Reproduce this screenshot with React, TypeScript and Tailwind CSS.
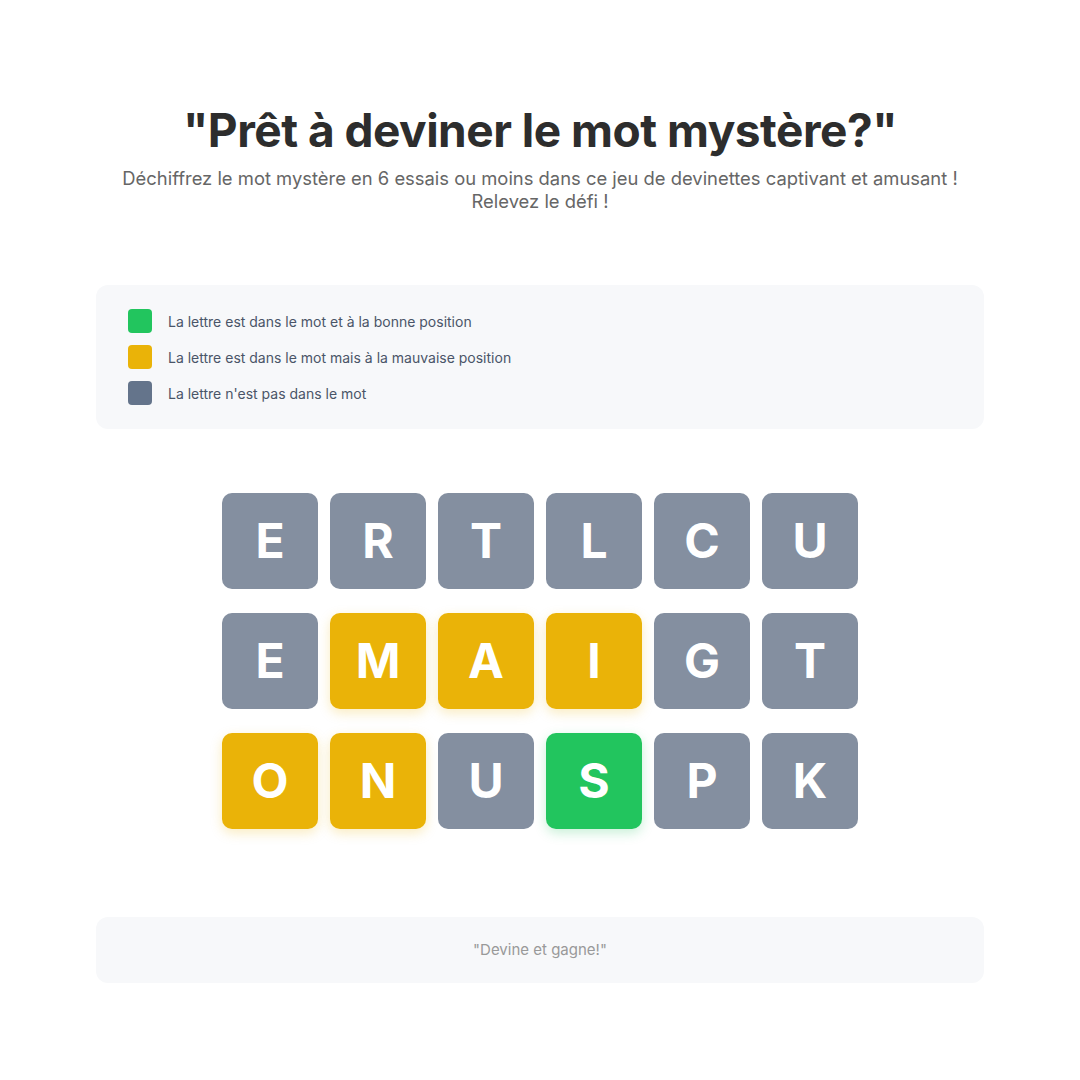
import React from "react";

type Tile = { l: string; s: "g" | "y" | "x" };

const rows: Tile[][] = [
  [
    { l: "E", s: "x" },
    { l: "R", s: "x" },
    { l: "T", s: "x" },
    { l: "L", s: "x" },
    { l: "C", s: "x" },
    { l: "U", s: "x" },
  ],
  [
    { l: "E", s: "x" },
    { l: "M", s: "y" },
    { l: "A", s: "y" },
    { l: "I", s: "y" },
    { l: "G", s: "x" },
    { l: "T", s: "x" },
  ],
  [
    { l: "O", s: "y" },
    { l: "N", s: "y" },
    { l: "U", s: "x" },
    { l: "S", s: "g" },
    { l: "P", s: "x" },
    { l: "K", s: "x" },
  ],
];

function tileClass(s: Tile["s"]) {
  if (s === "g") return "bg-[#22c55e] shadow-[0_4px_12px_rgba(34,197,94,0.25)]";
  if (s === "y") return "bg-[#eab308] shadow-[0_4px_12px_rgba(234,179,8,0.25)]";
  return "bg-[#848fa0]";
}

export default function App() {
  return (
    <div className="min-h-[1080px] w-full bg-white" style={{ fontFamily: "Inter, 'Liberation Sans', sans-serif" }}>
      <div className="mx-auto w-[888px] pt-[100px]">
        <header className="text-center">
          <h1 className="text-[46px] font-bold leading-[60px] tracking-[-0.5px] text-[#2d2d2d]">
            "Prêt à deviner le mot mystère?"
          </h1>
          <p className="mx-auto mt-[7px] text-[18.4px] leading-[23px] text-[#666666]">
            Déchiffrez le mot mystère en 6 essais ou moins dans ce jeu de devinettes captivant et amusant !
            <br />
            Relevez le défi !
          </p>
        </header>

        <section className="mt-[72px] rounded-[12px] bg-[#f7f8fa] px-[32px] py-[24px]">
          <div className="flex flex-col gap-[12px]">
            <div className="flex items-center gap-[16px]">
              <span className="h-[24px] w-[24px] rounded-[4px] bg-[#22c55e]" />
              <span className="text-[14px] text-[#4a5568]">La lettre est dans le mot et à la bonne position</span>
            </div>
            <div className="flex items-center gap-[16px]">
              <span className="h-[24px] w-[24px] rounded-[4px] bg-[#eab308]" />
              <span className="text-[14px] text-[#4a5568]">La lettre est dans le mot mais à la mauvaise position</span>
            </div>
            <div className="flex items-center gap-[16px]">
              <span className="h-[24px] w-[24px] rounded-[4px] bg-[#64748b]" />
              <span className="text-[14px] text-[#4a5568]">La lettre n'est pas dans le mot</span>
            </div>
          </div>
        </section>

        <section className="mt-[64px] flex flex-col items-center gap-[24px]">
          {rows.map((row, i) => (
            <div key={i} className="flex gap-[12px]">
              {row.map((t, j) => (
                <div
                  key={j}
                  className={`flex h-[96px] w-[96px] items-center justify-center rounded-[10px] text-[48px] font-bold text-white ${tileClass(t.s)}`}
                >
                  {t.l}
                </div>
              ))}
            </div>
          ))}
        </section>

        <footer className="mt-[88px] flex h-[66px] items-center justify-center rounded-[12px] bg-[#f7f8fa]">
          <span className="text-[15px] text-[#999999]">"Devine et gagne!"</span>
        </footer>
      </div>
    </div>
  );
}
